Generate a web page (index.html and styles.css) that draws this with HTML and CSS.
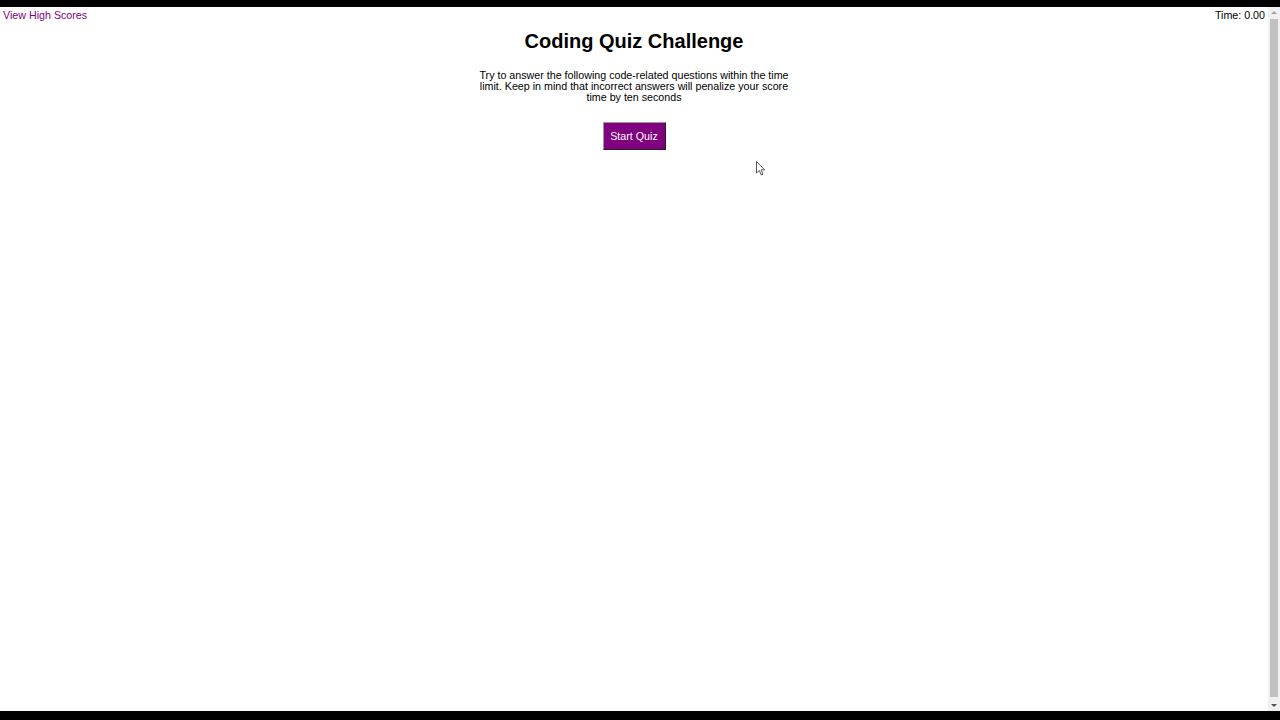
FILE: index.html
```html
<!DOCTYPE html>
<html>
<head>
<meta charset="utf-8">
<title>Coding Quiz Challenge</title>
<link rel="stylesheet" href="styles.css">
</head>
<body>
<div class="frame">
  <div class="bar-top"></div>
  <div class="viewport">
    <div class="page">
      <header class="header">
        <a class="scores-link" href="#">View High Scores</a>
        <span class="timer">Time: 0.00</span>
      </header>
      <main class="intro">
        <h1 class="title">Coding Quiz Challenge</h1>
        <p class="desc">Try to answer the following code-related questions within the time limit. Keep in mind that incorrect answers will penalize your score time by ten seconds</p>
        <button class="start-btn" type="button">Start Quiz</button>
      </main>
      <svg class="cursor" width="10" height="16" viewBox="0 0 10 16"><path d="M0.5 0.5 L0.5 12 L3.3 9.5 L5.3 14 L7 13.2 L5.1 8.9 L8.6 8.9 Z" fill="#fff" stroke="#555" stroke-width="1"/></svg>
    </div>
    <div class="scrollbar">
      <div class="arrow arrow-up"></div>
      <div class="track"><div class="thumb"></div></div>
      <div class="arrow arrow-down"></div>
    </div>
  </div>
  <div class="bar-bottom"></div>
</div>
</body>
</html>
```
FILE: styles.css
```css
html, body {
  margin: 0;
  padding: 0;
  background: #000;
}
.frame {
  width: 1280px;
  height: 720px;
  display: flex;
  flex-direction: column;
  overflow: hidden;
}
.bar-top {
  height: 7px;
  background: #000;
  flex: none;
}
.bar-bottom {
  flex: 1;
  background: #000;
}
.viewport {
  height: 704px;
  flex: none;
  display: flex;
  background: #fff;
}
.page {
  flex: 1;
  position: relative;
  font-family: "Liberation Sans", Arial, sans-serif;
  color: #000;
}
.header {
  display: flex;
  justify-content: space-between;
  align-items: center;
  padding: 1px 3px 0 3px;
  font-size: 10.7px;
  line-height: 14px;
}
.scores-link {
  color: #800080;
  text-decoration: none;
}
.timer {
  color: #000;
}
.intro {
  display: flex;
  flex-direction: column;
  align-items: center;
}
.title {
  margin: 7px 0 0 0;
  font-size: 20px;
  line-height: 24px;
  font-weight: bold;
}
.desc {
  width: 312px;
  margin: 17px 0 0 0;
  font-size: 10.7px;
  line-height: 11px;
  text-align: center;
}
.start-btn {
  margin-top: 19px;
  width: 63px;
  height: 28px;
  padding: 0;
  background: #800080;
  color: #fff;
  font-family: "Liberation Sans", Arial, sans-serif;
  font-size: 10.7px;
  border: 1px solid;
  border-color: #9a9a9a #222 #222 #9a9a9a;
}
.cursor {
  position: absolute;
  left: 756px;
  top: 154px;
}
.scrollbar {
  width: 12px;
  flex: none;
  background: #f1f1f1;
  display: flex;
  flex-direction: column;
}
.arrow {
  height: 12px;
  flex: none;
  position: relative;
}
.arrow-up::after {
  content: "";
  position: absolute;
  left: 3px;
  top: 4px;
  border-left: 3px solid transparent;
  border-right: 3px solid transparent;
  border-bottom: 3px solid #a3a3a3;
}
.arrow-down::after {
  content: "";
  position: absolute;
  left: 3px;
  top: 5px;
  border-left: 3px solid transparent;
  border-right: 3px solid transparent;
  border-top: 3px solid #505050;
}
.track {
  flex: 1;
  padding: 0 2px;
  display: flex;
}
.thumb {
  flex: 1;
  background: #c1c1c1;
  margin: 0 0 2px 0;
}
```
